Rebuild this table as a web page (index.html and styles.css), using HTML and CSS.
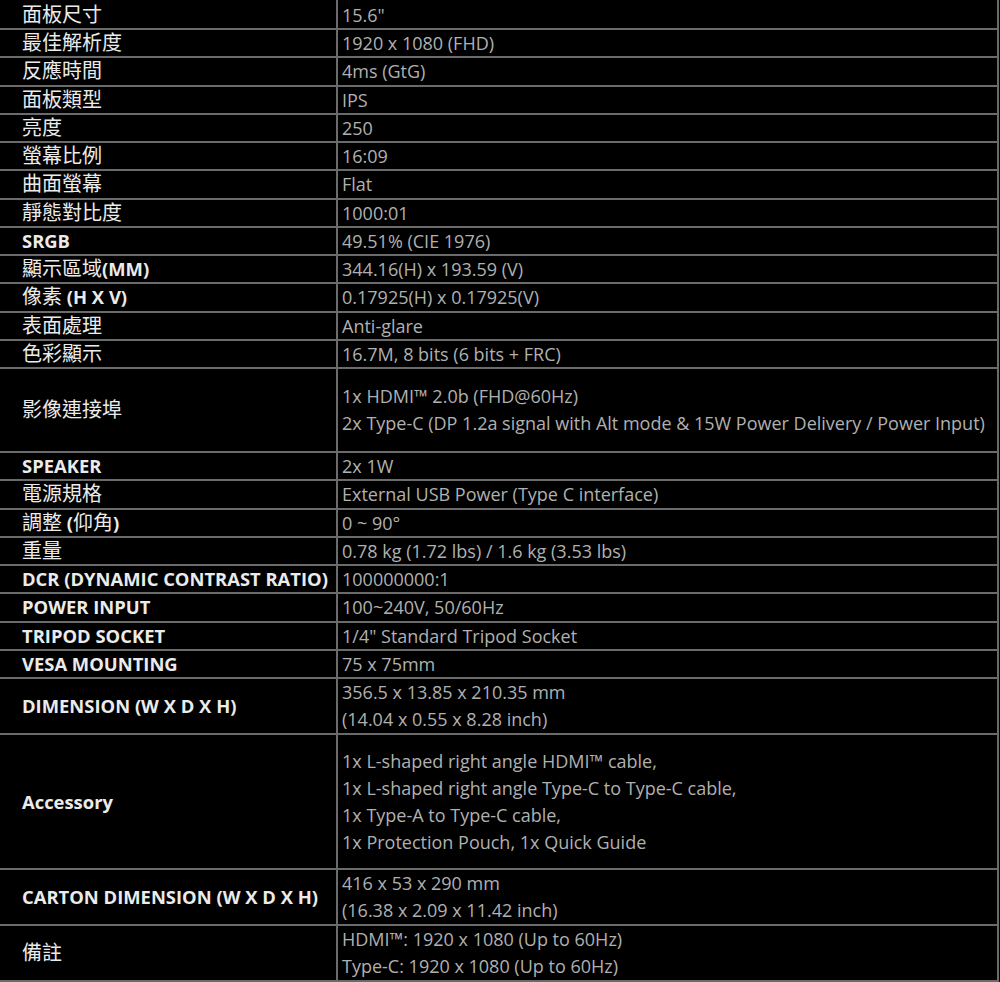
FILE: index.html
```html
<!DOCTYPE html>
<html lang="zh-Hant">
<head>
  <meta charset="UTF-8">
  <title>規格表</title>
  <link rel="stylesheet" href="styles.css">
</head>
<body>

  <!-- Spec table -->
  <table class="spec">
    <colgroup>
      <col class="col-label">
      <col class="col-value">
    </colgroup>
    <tbody>
      <tr><th><span class="zh">面板尺寸</span></th><td>15.6"</td></tr>
      <tr><th><span class="zh">最佳解析度</span></th><td>1920 x 1080 (FHD)</td></tr>
      <tr><th><span class="zh">反應時間</span></th><td>4ms (GtG)</td></tr>
      <tr><th><span class="zh">面板類型</span></th><td>IPS</td></tr>
      <tr><th><span class="zh">亮度</span></th><td>250</td></tr>
      <tr><th><span class="zh">螢幕比例</span></th><td>16:09</td></tr>
      <tr><th><span class="zh">曲面螢幕</span></th><td>Flat</td></tr>
      <tr><th><span class="zh">靜態對比度</span></th><td>1000:01</td></tr>
      <tr><th>SRGB</th><td>49.51% (CIE 1976)</td></tr>
      <tr><th><span class="zh">顯示區域</span>(MM)</th><td>344.16(H) x 193.59 (V)</td></tr>
      <tr><th><span class="zh">像素</span> (H X V)</th><td>0.17925(H) x 0.17925(V)</td></tr>
      <tr><th><span class="zh">表面處理</span></th><td>Anti-glare</td></tr>
      <tr><th><span class="zh">色彩顯示</span></th><td>16.7M, 8 bits (6 bits + FRC)</td></tr>
      <tr class="padded">
        <th><span class="zh">影像連接埠</span></th>
        <td class="lines">1x HDMI™ 2.0b (FHD@60Hz)<br>2x Type-C (DP 1.2a signal with Alt mode &amp; 15W Power Delivery / Power Input)</td>
      </tr>
      <tr><th>SPEAKER</th><td>2x 1W</td></tr>
      <tr><th><span class="zh">電源規格</span></th><td>External USB Power (Type C interface)</td></tr>
      <tr><th><span class="zh">調整</span> (<span class="zh">仰角</span>)</th><td>0 ~ 90°</td></tr>
      <tr><th><span class="zh">重量</span></th><td>0.78 kg (1.72 lbs) / 1.6 kg (3.53 lbs)</td></tr>
      <tr><th>DCR (DYNAMIC CONTRAST RATIO)</th><td>100000000:1</td></tr>
      <tr><th>POWER INPUT</th><td>100~240V, 50/60Hz</td></tr>
      <tr><th>TRIPOD SOCKET</th><td>1/4" Standard Tripod Socket</td></tr>
      <tr><th>VESA MOUNTING</th><td>75 x 75mm</td></tr>
      <tr>
        <th>DIMENSION (W X D X H)</th>
        <td class="lines">356.5 x 13.85 x 210.35 mm<br>(14.04 x 0.55 x 8.28 inch)</td>
      </tr>
      <tr class="padded tight">
        <th>Accessory</th>
        <td class="lines">1x L-shaped right angle HDMI™ cable,<br>1x L-shaped right angle Type-C to Type-C cable,<br>1x Type-A to Type-C cable,<br>1x Protection Pouch, 1x Quick Guide</td>
      </tr>
      <tr>
        <th>CARTON DIMENSION (W X D X H)</th>
        <td class="lines">416 x 53 x 290 mm<br>(16.38 x 2.09 x 11.42 inch)</td>
      </tr>
      <tr>
        <th><span class="zh">備註</span></th>
        <td class="lines">HDMI™: 1920 x 1080 (Up to 60Hz)<br>Type-C: 1920 x 1080 (Up to 60Hz)</td>
      </tr>
    </tbody>
  </table>

</body>
</html>
```

FILE: styles.css
```css
* {
  box-sizing: border-box;
}

body {
  margin: 0;
  background: #000;
  font-family: 'Open Sans', 'Noto Sans CJK TC', sans-serif;
  font-size: 18px;
}

.spec {
  width: 1001px;
  margin-left: -2px;
  border-collapse: collapse;
  table-layout: fixed;
}

.col-label {
  width: 338px;
}

.spec th,
.spec td {
  border: 2px solid #6b6b6b;
  padding: 0 4px;
  height: 28.25px;
  line-height: 26px;
  vertical-align: middle;
  white-space: nowrap;
}

/* top edge of the table is cropped in the source */
.spec tr:first-child > th,
.spec tr:first-child > td {
  border-top: 0;
  padding-top: 2px;
}

.spec th {
  padding-left: 22px;
  text-align: left;
  font-size: 18.4px;
  font-weight: 700;
  color: #ebebeb;
}

.spec td {
  color: #b0b0b0;
  font-weight: 400;
}

.zh {
  font-family: 'Noto Sans CJK TC', sans-serif;
  font-size: 20px;
  font-weight: 400;
  line-height: 1;
}

.spec td.lines {
  line-height: 27px;
}

.spec tr.padded td {
  padding-top: 14px;
  padding-bottom: 14px;
}

.spec tr.tight td {
  padding-top: 13px;
  padding-bottom: 12px;
}
```
